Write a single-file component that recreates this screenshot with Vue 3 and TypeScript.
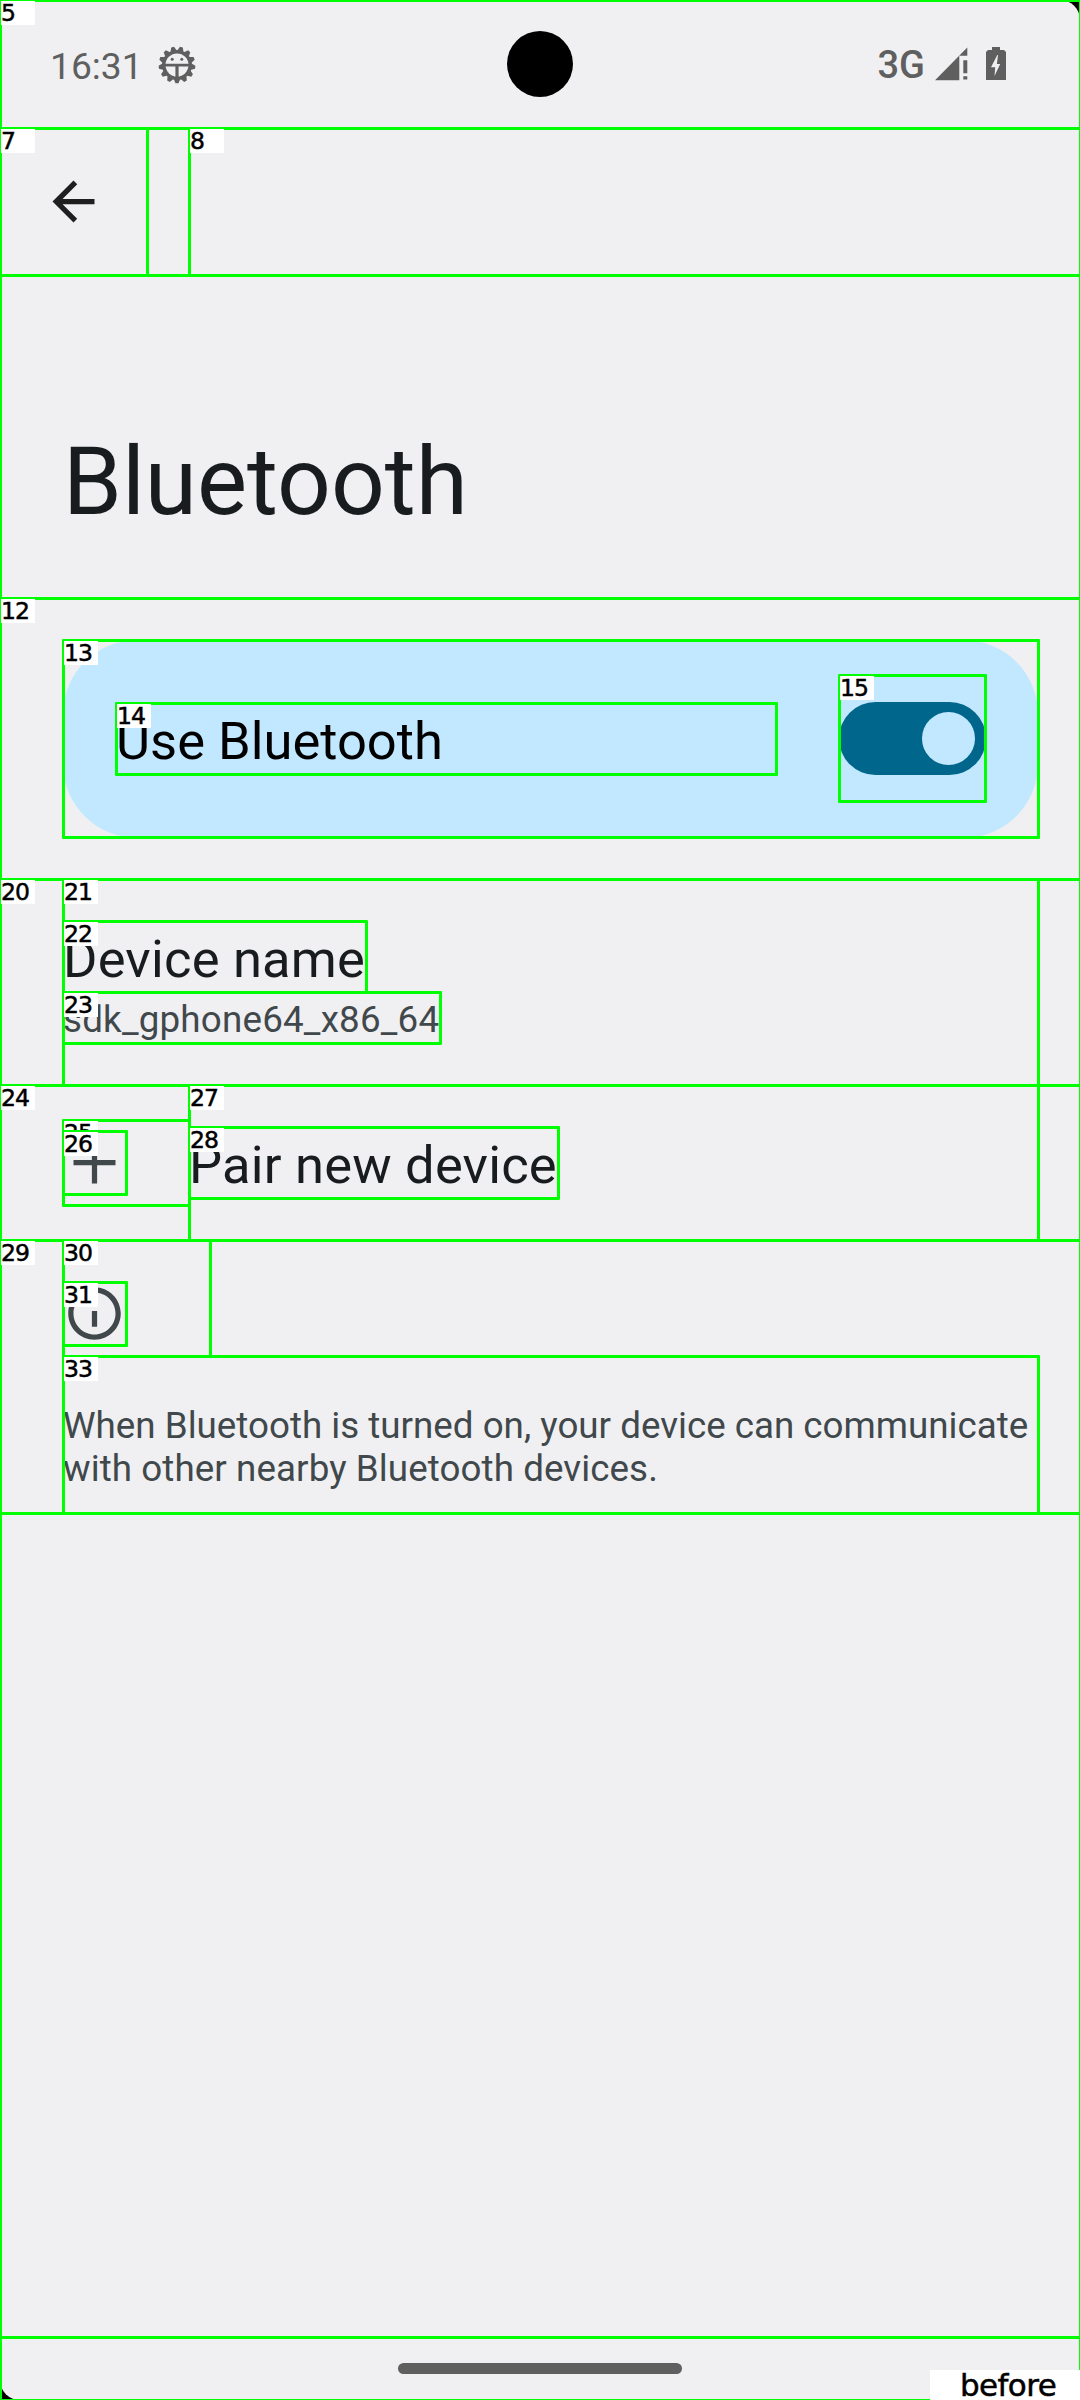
<script setup lang="ts">
interface Box {
  id: string
  x1: number
  y1: number
  x2: number
  y2: number
}

const box = (id: string, x1: number, y1: number, x2: number, y2: number): Box => ({ id, x1, y1, x2, y2 })

// Element bounds, in paint order: later boxes cover earlier labels.
const boxes: Box[] = [
  box('', 0, 2337, 1080, 2400),
  box('', 0, 128, 1080, 275),
  box('5', 0, 0, 1080, 2400),
  box('7', 0, 128, 147, 275),
  box('8', 189, 128, 1080, 275),
  box('12', 0, 598, 1080, 879),
  box('13', 63, 640, 1038, 837),
  box('14', 116, 703, 776, 774),
  box('15', 839, 675, 985, 801),
  box('20', 0, 879, 1080, 1085),
  box('21', 63, 879, 1038, 1085),
  box('22', 63, 921, 366, 992),
  box('23', 63, 992, 440, 1043),
  box('24', 0, 1085, 1080, 1240),
  box('25', 63, 1120, 189, 1205),
  box('26', 63, 1131, 126, 1194),
  box('27', 189, 1085, 1038, 1240),
  box('28', 189, 1127, 558, 1198),
  box('29', 0, 1240, 1080, 1513),
  box('30', 63, 1240, 210, 1356),
  box('31', 63, 1282, 126, 1345),
  box('33', 63, 1356, 1038, 1513),
]

const place = (b: Box) => ({
  left: `${b.x1 - 1}px`,
  top: `${b.y1 - 1}px`,
  width: `${b.x2 - b.x1 + 3}px`,
  height: `${b.y2 - b.y1 + 3}px`,
})

// Thirteen-toothed gear around the debug icon, one tooth pointing down.
const teeth = 13
const gear = Array.from({ length: teeth }, (_, i) => {
  const mid = (i / teeth) * 2 * Math.PI + Math.PI / 2
  const at = (r: number, d: number) =>
    `${(19 + r * Math.cos(mid + d)).toFixed(2)},${(19 + r * Math.sin(mid + d)).toFixed(2)}`
  return [at(15, -0.2), at(18.4, -0.08), at(18.4, 0.08), at(15, 0.2)].join(' ')
}).join(' ')
</script>

<template>
  <div class="device">
    <div class="screen">
      <header class="status">
        <div class="status-left">
          <span class="time">16:31</span>
          <svg class="debug" width="38" height="38" viewBox="0 0 38 38">
            <polygon :points="gear" />
            <circle class="face" cx="19" cy="19" r="11.5" />
            <circle cx="14.2" cy="13.3" r="1.5" />
            <circle cx="23.8" cy="13.3" r="1.5" />
            <path d="M7 17.7h24v2.7H7zM17.4 19h3.2v12h-3.2z" />
          </svg>
        </div>
        <div class="camera"></div>
        <div class="status-right">
          <span class="network">3G</span>
          <svg class="signal" width="33" height="34" viewBox="0 0 33 34">
            <path d="M0 33.2L32.3 .6V8.7H24.3V33.2zM28.3 13.2h4V26.3h-4zM28.3 29.2h4v3.2h-4z" />
          </svg>
          <svg class="battery" width="20" height="33" viewBox="0 0 20 33">
            <path d="M6 0h8v3h4l2 2v28H0V5l2-2h4z" />
            <path class="bolt" d="M11.3 8L5 20.3h4.2L8.5 29 14.2 17h-3.3L12 8z" />
          </svg>
        </div>
      </header>

      <nav class="toolbar">
        <svg width="63" height="63" viewBox="0 0 24 24">
          <path d="M20 11H7.83l5.59-5.59L12 4l-8 8 8 8 1.41-1.41L7.83 13H20v-2z" />
        </svg>
      </nav>

      <h1 class="title">Bluetooth</h1>

      <section class="main-switch">
        <div class="card">
          <span class="card-label">Use Bluetooth</span>
          <div class="track"><div class="thumb"></div></div>
        </div>
      </section>

      <section class="row name-row">
        <div class="label">Device name</div>
        <div class="summary">sdk_gphone64_x86_64</div>
      </section>

      <section class="row pair-row">
        <svg width="63" height="63" viewBox="0 0 24 24">
          <path d="M11 4h2v7h7v2h-7v7h-2v-7H4v-2h7z" />
        </svg>
        <div class="label">Pair new device</div>
      </section>

      <section class="row footer">
        <svg width="63" height="63" viewBox="0 0 24 24">
          <path
            d="M11 7h2v2h-2zm0 4h2v6h-2zm1-9C6.48 2 2 6.48 2 12s4.48 10 10 10 10-4.48 10-10S17.52 2 12 2zm0 18c-4.41 0-8-3.59-8-8s3.59-8 8-8 8 3.59 8 8-3.59 8-8 8z"
          />
        </svg>
        <p>
          When Bluetooth is turned on, your device can communicate<br /><span class="last-line">with other nearby Bluetooth devices.</span>
        </p>
      </section>

      <div class="gesture"><div class="pill"></div></div>
    </div>

    <div v-for="(b, i) in boxes" :key="i" class="box" :style="place(b)">
      <span v-if="b.id" class="tag">{{ b.id }}</span>
    </div>
    <div class="caption">before</div>
  </div>
</template>

<style>
body {
  margin: 0;
}
</style>

<style scoped>
.device {
  position: relative;
  width: 1080px;
  height: 2400px;
  overflow: hidden;
  background: #000;
  font-family: Roboto, "Liberation Sans", sans-serif;
}
.screen {
  display: flex;
  flex-direction: column;
  height: 2400px;
  border-radius: 20px;
  background: #f0f0f2;
  color: #191c1e;
}
.status {
  display: grid;
  grid-template-columns: 1fr 66px 1fr;
  height: 128px;
  color: #5f5f5f;
}
.status svg {
  fill: #5f5f5f;
}
.status-left {
  display: flex;
  align-items: flex-start;
  padding-left: 50px;
}
.time {
  width: 93px;
  margin-top: 44px;
  font-size: 37.2px;
  line-height: 44px;
}
.debug {
  margin: 46px 0 0 15px;
}
.debug .face,
.battery .bolt {
  fill: #f0f0f2;
}
.camera {
  width: 66px;
  height: 66px;
  margin-top: 31px;
  border-radius: 50%;
  background: #000;
}
.status-right {
  display: flex;
  justify-content: flex-end;
  align-items: flex-start;
  padding-right: 74px;
}
.network {
  margin: 43px 10px 0 0;
  font-size: 38px;
  font-weight: 500;
  line-height: 44px;
}
.signal {
  margin: 47px 18px 0 0;
}
.battery {
  margin-top: 47px;
}
.toolbar {
  display: flex;
  align-items: center;
  height: 147px;
  padding-left: 42px;
  fill: #1f1f1f;
}
.title {
  box-sizing: border-box;
  height: 323px;
  margin: 0;
  padding: 152px 0 0 63px;
  font-size: 94.5px;
  font-weight: 400;
  line-height: 110px;
}
.main-switch {
  box-sizing: border-box;
  height: 281px;
  padding: 42px 42px 0 63px;
}
.card {
  display: flex;
  align-items: center;
  justify-content: space-between;
  box-sizing: border-box;
  height: 198px;
  padding: 0 52px 0 53px;
  border-radius: 74px;
  background: #c2e8ff;
}
.card-label {
  padding-top: 5px;
  color: #000;
  font-size: 52.5px;
  line-height: 71px;
}
.track {
  display: flex;
  align-items: center;
  justify-content: flex-end;
  box-sizing: border-box;
  width: 147px;
  height: 73px;
  margin-bottom: 2px;
  padding-right: 11px;
  border-radius: 37px;
  background: #00668b;
}
.thumb {
  width: 53px;
  height: 53px;
  border-radius: 50%;
  background: #c2e8ff;
}
.row {
  box-sizing: border-box;
  padding-left: 63px;
}
.row svg {
  display: block;
  flex: none;
  fill: #40484c;
}
.label {
  font-size: 52.5px;
  line-height: 71px;
  letter-spacing: 0.2px;
}
.name-row {
  height: 206px;
  padding-top: 45px;
}
.summary {
  color: #40484c;
  font-size: 36.75px;
  line-height: 49px;
  letter-spacing: 0.2px;
}
.pair-row {
  display: flex;
  align-items: center;
  gap: 63px;
  height: 155px;
}
.pair-row .label {
  padding-top: 5px;
}
.footer {
  height: 273px;
  padding-top: 42px;
}
.footer p {
  margin: 59px 0 0;
  color: #40484c;
  font-size: 36.75px;
  line-height: 43px;
}
.last-line {
  letter-spacing: 0.08px;
}
.gesture {
  display: flex;
  justify-content: center;
  height: 63px;
  margin-top: auto;
}
.pill {
  width: 284px;
  height: 11px;
  margin-top: 26px;
  border-radius: 6px;
  background: #5f5f5f;
}
.box {
  position: absolute;
  box-sizing: border-box;
  border: 3px solid #0f0;
  border-radius: 1px;
}
.tag,
.caption {
  background: #fff;
  color: #000;
  font-family: "DejaVu Sans", sans-serif;
  -webkit-text-stroke: 0.5px #000;
}
.tag {
  position: absolute;
  left: -1px;
  top: -1px;
  width: 34px;
  height: 24px;
  font-size: 23.5px;
  line-height: 25px;
  letter-spacing: -1px;
}
.caption {
  position: absolute;
  left: 930px;
  top: 2370px;
  box-sizing: border-box;
  width: 150px;
  height: 30px;
  padding-left: 30px;
  font-size: 31px;
  line-height: 30px;
  letter-spacing: -0.6px;
}
</style>
